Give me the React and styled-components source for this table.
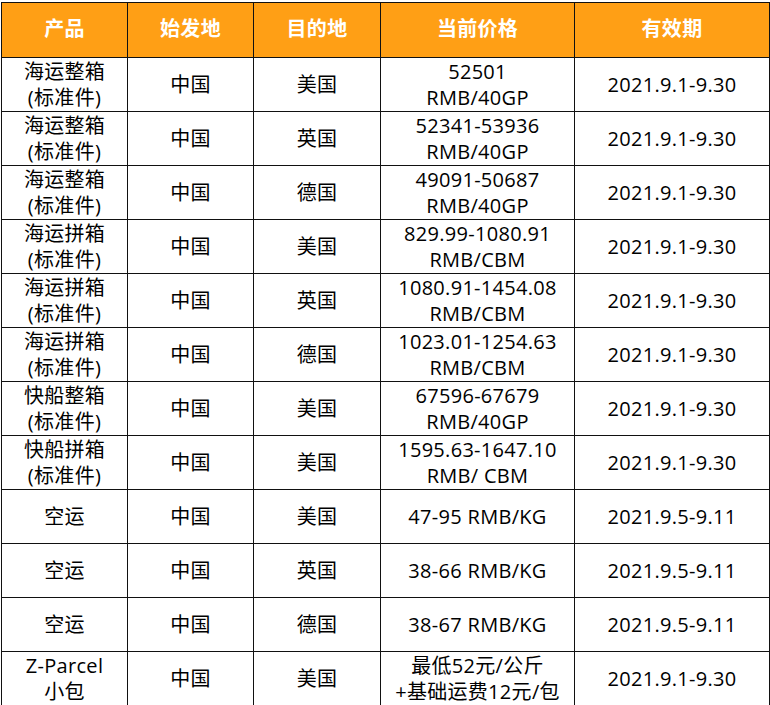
import React from "react";
import styled, { createGlobalStyle } from "styled-components";

const GlobalStyle = createGlobalStyle`
  html, body {
    margin: 0;
    padding: 0;
    background: #ffffff;
  }
`;

const Wrap = styled.div`
  padding: 2px 0 0 1px;
`;

const Table = styled.table`
  border-collapse: collapse;
  table-layout: fixed;
  width: 768px;
  font-family: "Open Sans", "Noto Sans CJK SC", sans-serif;
  font-size: 20px;
  letter-spacing: 0.3px;
  color: #000;
`;

const Col = styled.col`
  width: ${(p) => p.$w}px;
`;

const Head = styled.th`
  background: #ff9f15;
  color: #ffffff;
  font-weight: bold;
  height: 52px;
  padding: 0 0 2px;
  border: 1px solid #111;
  text-align: center;
  vertical-align: middle;
  line-height: 26px;
`;

const Cell = styled.td`
  height: 53px;
  padding: 0;
  border: 1px solid #111;
  text-align: center;
  vertical-align: middle;
  line-height: 26px;
  white-space: nowrap;
`;

const cols = [126, 126, 127, 194, 195];
const headers = ["产品", "始发地", "目的地", "当前价格", "有效期"];

const rows = [
  [["海运整箱", "(标准件)"], "中国", "美国", ["52501", "RMB/40GP"], "2021.9.1-9.30"],
  [["海运整箱", "(标准件)"], "中国", "英国", ["52341-53936", "RMB/40GP"], "2021.9.1-9.30"],
  [["海运整箱", "(标准件)"], "中国", "德国", ["49091-50687", "RMB/40GP"], "2021.9.1-9.30"],
  [["海运拼箱", "(标准件)"], "中国", "美国", ["829.99-1080.91", "RMB/CBM"], "2021.9.1-9.30"],
  [["海运拼箱", "(标准件)"], "中国", "英国", ["1080.91-1454.08", "RMB/CBM"], "2021.9.1-9.30"],
  [["海运拼箱", "(标准件)"], "中国", "德国", ["1023.01-1254.63", "RMB/CBM"], "2021.9.1-9.30"],
  [["快船整箱", "(标准件)"], "中国", "美国", ["67596-67679", "RMB/40GP"], "2021.9.1-9.30"],
  [["快船拼箱", "(标准件)"], "中国", "美国", ["1595.63-1647.10", "RMB/ CBM"], "2021.9.1-9.30"],
  ["空运", "中国", "美国", "47-95 RMB/KG", "2021.9.5-9.11"],
  ["空运", "中国", "英国", "38-66 RMB/KG", "2021.9.5-9.11"],
  ["空运", "中国", "德国", "38-67 RMB/KG", "2021.9.5-9.11"],
  [["Z-Parcel", "小包"], "中国", "美国", ["最低52元/公斤", "+基础运费12元/包"], "2021.9.1-9.30"],
];

const Lines = ({ v }) =>
  Array.isArray(v)
    ? v.map((line, i) => (
        <React.Fragment key={i}>
          {i > 0 && <br />}
          {line}
        </React.Fragment>
      ))
    : v;

export default function App() {
  return (
    <Wrap>
      <GlobalStyle />
      <Table>
        <colgroup>
          {cols.map((w, i) => (
            <Col key={i} $w={w} />
          ))}
        </colgroup>
        <thead>
          <tr>
            {headers.map((h) => (
              <Head key={h}>{h}</Head>
            ))}
          </tr>
        </thead>
        <tbody>
          {rows.map((r, i) => (
            <tr key={i}>
              {r.map((c, j) => (
                <Cell key={j}>
                  <Lines v={c} />
                </Cell>
              ))}
            </tr>
          ))}
        </tbody>
      </Table>
    </Wrap>
  );
}
